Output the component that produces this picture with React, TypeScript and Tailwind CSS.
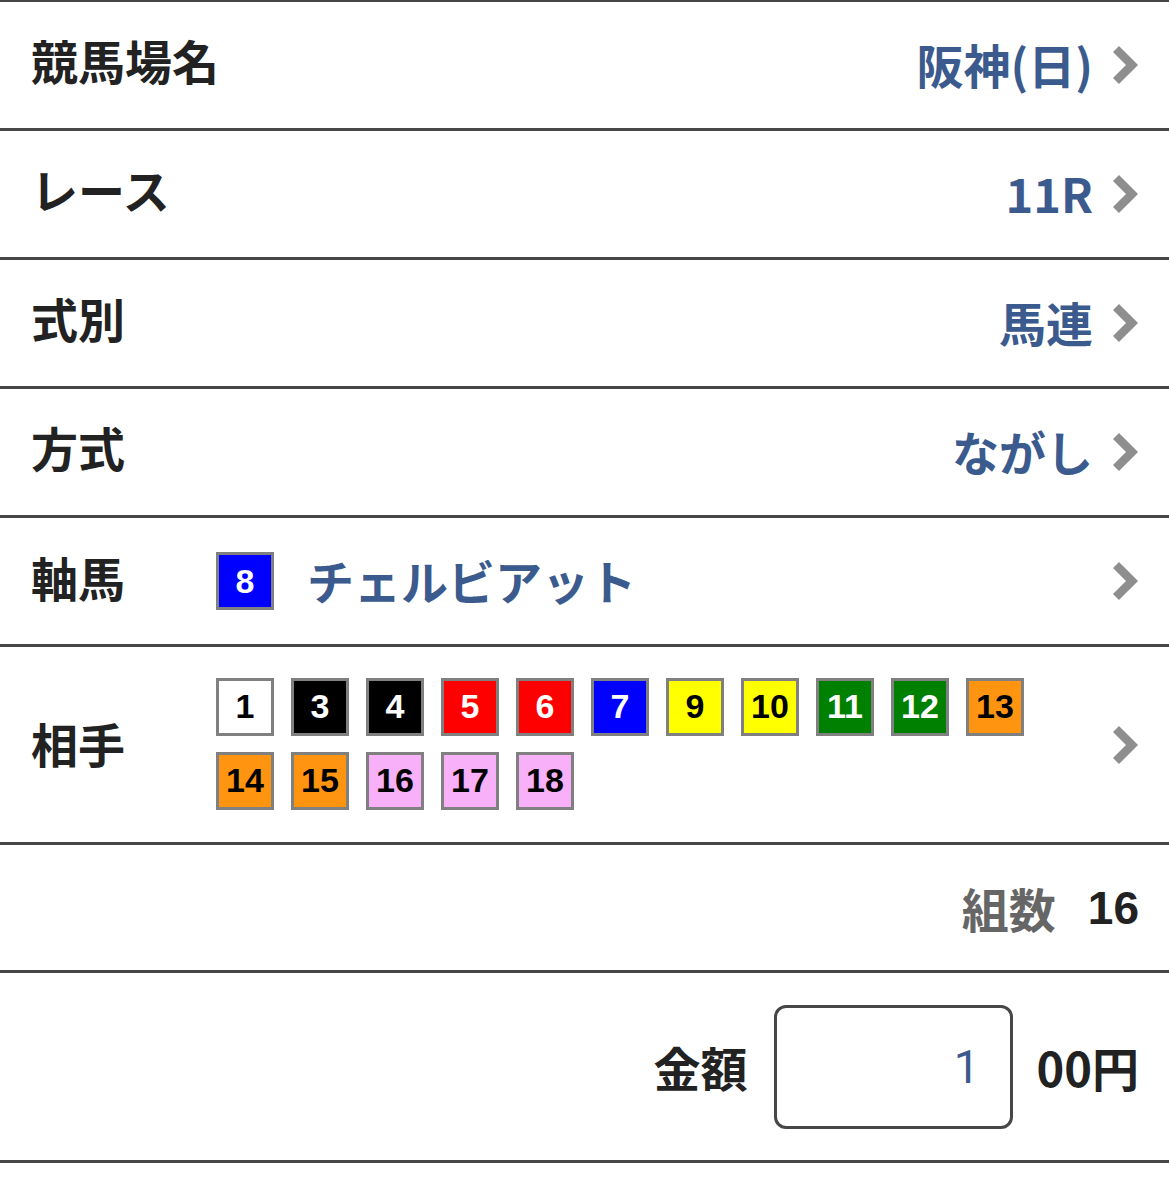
const Chevron = () => (
    <svg width="26" height="40" viewBox="0 0 26 40" className="shrink-0">
        <path
            d="M6 7 L19 20 L6 33"
            fill="none"
            stroke="#8e8e8e"
            strokeWidth="8.5"
            strokeLinecap="square"
        />
    </svg>
);

const boxStyle: Record<string, string> = {
    white: "bg-white text-black",
    black: "bg-black text-white",
    red: "bg-[#ff0000] text-white",
    blue: "bg-[#0000ff] text-white",
    yellow: "bg-[#ffff00] text-black",
    green: "bg-[#008000] text-white",
    orange: "bg-[#ff9410] text-black",
    pink: "bg-[#f8b0f8] text-black",
};

const NumBox = ({ n, color }: { n: number; color: string }) => (
    <div
        className={
            "w-[58px] h-[58px] border-[3px] border-[#808080] flex items-center justify-center text-[34px] font-bold font-['Liberation_Sans',sans-serif] " +
            boxStyle[color]
        }
    >
        {n}
    </div>
);

const colorOf = (n: number) => {
    if (n <= 2) return "white";
    if (n <= 4) return "black";
    if (n <= 6) return "red";
    if (n <= 8) return "blue";
    if (n <= 10) return "yellow";
    if (n <= 12) return "green";
    if (n <= 15) return "orange";
    return "pink";
};

const jp = "font-['Noto_Sans_CJK_JP','Liberation_Sans',sans-serif]";

const App = () => {
    const rows = [
        { label: "競馬場名", value: "阪神(日)" },
        { label: "レース", value: "11R" },
        { label: "式別", value: "馬連" },
        { label: "方式", value: "ながし" },
    ];
    const partners = [1, 3, 4, 5, 6, 7, 9, 10, 11, 12, 13, 14, 15, 16, 17, 18];

    return (
        <div className={"w-[1169px] min-h-[1184px] bg-white text-[#222] " + jp}>
            <div className="border-t-2 border-[#474747]">
                {rows.map((r) => (
                    <div
                        key={r.label}
                        className="h-[129px] border-b-[3px] border-[#474747] flex items-center pl-[31px] pr-[30px]"
                    >
                        <div className="text-[47px] font-bold leading-none -mt-[12px]">
                            {r.label}
                        </div>
                        <div className="ml-auto flex items-center gap-[20px]">
                            <span className="text-[47px] font-bold leading-none text-[#3b5a8e] -mt-[4px]">
                                {r.value}
                            </span>
                            <Chevron />
                        </div>
                    </div>
                ))}

                <div className="h-[129px] border-b-[3px] border-[#474747] flex items-center pl-[31px] pr-[30px]">
                    <div className="w-[185px] text-[47px] font-bold leading-none -mt-[10px]">
                        軸馬
                    </div>
                    <NumBox n={8} color="blue" />
                    <span className="ml-[33px] text-[47px] font-bold leading-none text-[#3b5a8e] -mt-[4px]">
                        チェルビアット
                    </span>
                    <div className="ml-auto">
                        <Chevron />
                    </div>
                </div>

                <div className="h-[198px] border-b-[3px] border-[#474747] flex items-center pl-[31px] pr-[30px]">
                    <div className="w-[185px] text-[47px] font-bold leading-none -mt-[4px]">
                        相手
                    </div>
                    <div className="w-[830px] flex flex-wrap gap-x-[17px] gap-y-[16px] -mt-[2px]">
                        {partners.map((n) => (
                            <NumBox key={n} n={n} color={colorOf(n)} />
                        ))}
                    </div>
                    <div className="ml-auto">
                        <Chevron />
                    </div>
                </div>

                <div className="h-[128px] border-b-[3px] border-[#474747] flex items-center justify-end pr-[30px]">
                    <span className="text-[47px] font-bold leading-none text-[#666]">組数</span>
                    <span className="ml-[32px] text-[46px] font-bold leading-none font-['Liberation_Sans',sans-serif]">
                        16
                    </span>
                </div>

                <div className="h-[190px] border-b-[3px] border-[#474747] flex items-center justify-end pr-[30px]">
                    <span className="text-[47px] font-bold leading-none">金額</span>
                    <div className="ml-[26px] w-[239px] h-[124px] border-[3px] border-[#474747] rounded-[12px] flex items-center justify-end pr-[30px]">
                        <span className="text-[46px] leading-none text-[#3b5a8e] font-['Roboto',sans-serif]">
                            1
                        </span>
                    </div>
                    <span className="ml-[24px] text-[47px] font-bold leading-none">00円</span>
                </div>
            </div>
        </div>
    );
};

export default App;
